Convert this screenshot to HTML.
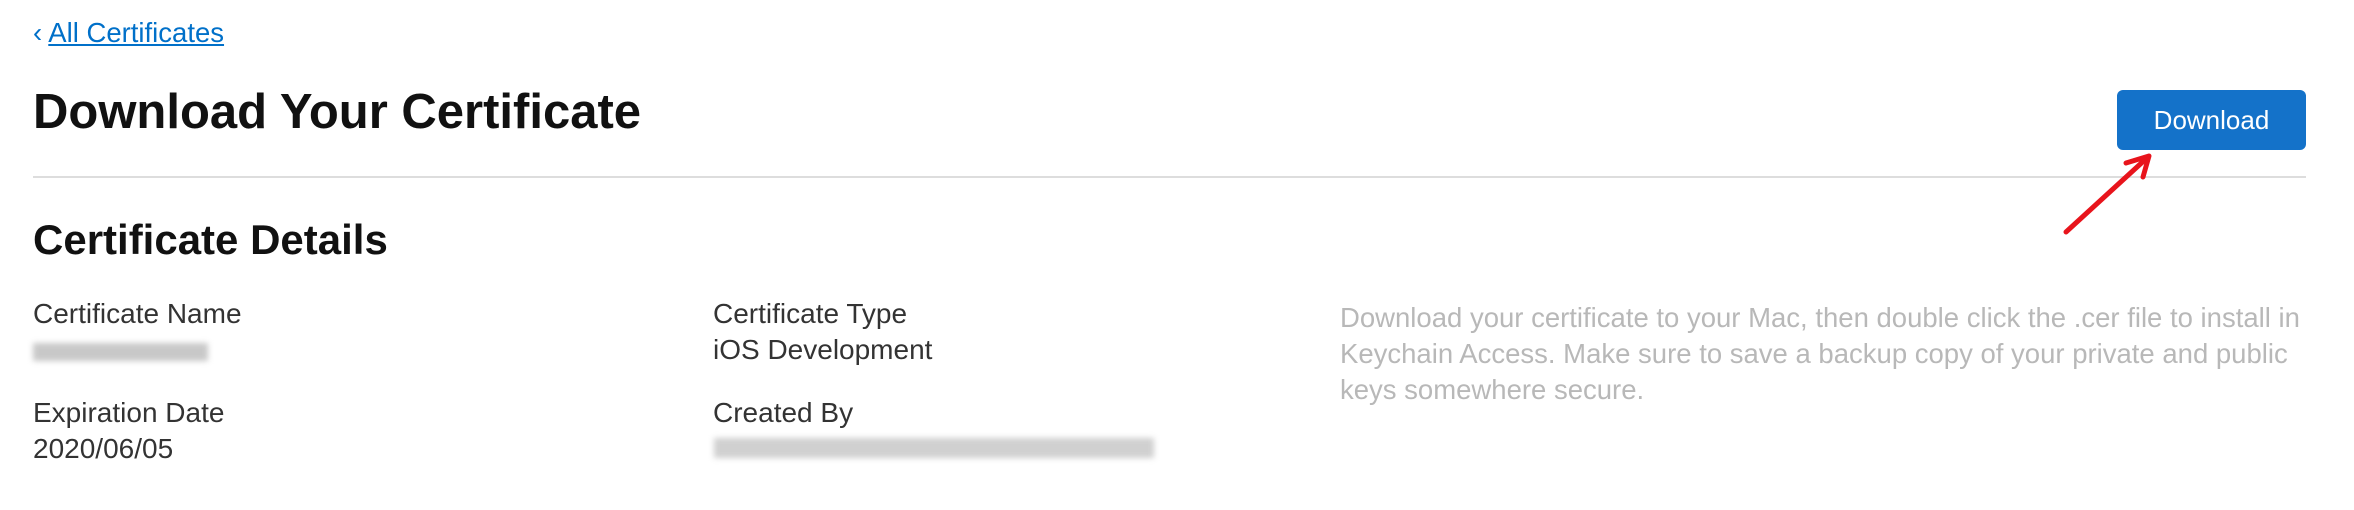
<!DOCTYPE html>
<html><head><meta charset="utf-8"><style>
body{margin:0;width:2354px;height:510px;background:#fff;font-family:"Liberation Sans",sans-serif;position:relative;overflow:hidden;color:#1d1d1f}
.a{position:absolute;white-space:nowrap}
.lbl{font-size:28px;color:#333}
.blur{position:absolute;background:#c8c8c8;filter:blur(3px)}
</style></head><body>
<div class="a" style="left:33px;top:17px;font-size:27.5px;color:#0070c9">&#8249; <span style="text-decoration:underline">All Certificates</span></div>
<div class="a" style="left:33px;top:84px;font-size:49px;font-weight:bold;color:#111">Download Your Certificate</div>
<div class="a" style="left:2117px;top:90px;width:189px;height:60px;background:#1472c9;border-radius:6px;color:#fff;font-size:26px;line-height:60px;text-align:center">Download</div>
<div class="a" style="left:33px;top:176px;width:2273px;height:2px;background:#ddd"></div>
<div class="a" style="left:33px;top:216px;font-size:42px;font-weight:bold;color:#111">Certificate Details</div>
<div class="a lbl" style="left:33px;top:298px">Certificate Name</div>
<div class="blur" style="left:33px;top:343px;width:175px;height:18px"></div>
<div class="a lbl" style="left:33px;top:397px">Expiration Date</div>
<div class="a lbl" style="left:33px;top:433px">2020/06/05</div>
<div class="a lbl" style="left:713px;top:298px">Certificate Type</div>
<div class="a lbl" style="left:713px;top:334px">iOS Development</div>
<div class="a lbl" style="left:713px;top:397px">Created By</div>
<div class="blur" style="left:714px;top:438px;width:440px;height:20px;background:#d0d0d0"></div>
<div class="a" style="left:1340px;top:300px;font-size:27.5px;line-height:36px;color:#b8b8b8">Download your certificate to your Mac, then double click the .cer file to install in<br>Keychain Access. Make sure to save a backup copy of your private and public<br>keys somewhere secure.</div>
<svg class="a" style="left:0;top:0" width="2354" height="510"><g stroke="#e8141c" stroke-width="5" fill="none" stroke-linecap="round" stroke-linejoin="round"><path d="M2066 232 L2148 157"/><path d="M2126 163 L2149 156 L2143 177"/></g></svg>
</body></html>
